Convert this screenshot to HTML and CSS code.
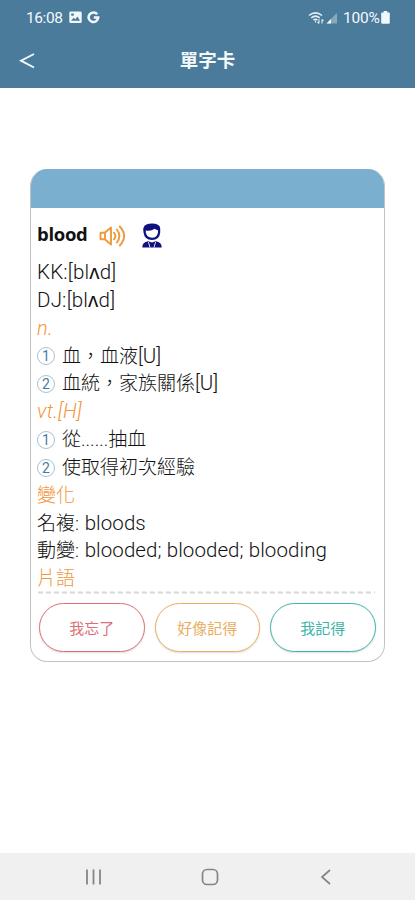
FILE: index.html
```html
<!DOCTYPE html>
<html lang="zh-Hant">
<head>
<meta charset="utf-8">
<title>單字卡</title>
<link rel="stylesheet" href="styles.css">
</head>
<body>
<header class="top">
  <div class="status">
    <span class="clock">16:08</span>
    <svg class="pic" width="13" height="13" viewBox="0 0 13 13"><rect x=".3" y=".5" width="12.4" height="11.5" rx="1.3" fill="#f1f7fa"/><path d="M2 9.8 4.7 6.7 6.3 8.3 8.5 5.5 11 9.8Z" fill="#4a7b9b"/><path d="M2.2 2.5h2.6v2.2H2.2z" fill="#4a7b9b"/></svg>
    <svg class="goog" width="13" height="13" viewBox="0 0 13 13"><path d="M10.2 3.3A4.8 4.8 0 1 0 11.2 6.5H6.8" fill="none" stroke="#f1f7fa" stroke-width="2.5"/></svg>
    <span class="gap"></span>
    <svg class="wifi" width="17" height="14" viewBox="0 0 17 14" fill="none" stroke="#e5eff4" stroke-width="1.6"><path d="M1 4.5Q7.500-.8 14 4.500M3.300 6.800Q7.500 3.300 11.700 6.800M5.500 9.100Q7.500 7.500 9.500 9.100"/><path d="M7.500 9.500v2M11 8.300v4M9.600 11l1.400 1.500M14 12.500v-4M14 8.300l1.400 1.500" stroke-width="1.100"/></svg>
    <svg class="signal" width="12" height="12" viewBox="0 0 12 12"><path d="M.5 11.500 11 1v10.500Z" fill="#86a9be"/><path d="M.5 11.500 5 7v4.500Z" fill="#f1f7fa"/></svg>
    <span class="percent">100%</span>
    <svg class="battery" width="9" height="13" viewBox="0 0 9 13"><path d="M2.700 0h3.600v1.500H8a.8.800 0 0 1 .8.800v9.400a1 1 0 0 1-1 1H1.200a1 1 0 0 1-1-1V2.300a.8.800 0 0 1 .8-.8h1.700Z" fill="#f1f7fa"/></svg>
  </div>
  <div class="title-row">
    <svg class="back" width="17" height="18" viewBox="0 0 17 18"><path d="M16 2 3 8.700l13 6.800" fill="none" stroke="#f4f9fb" stroke-width="1.900"/></svg>
    <h1>單字卡</h1>
  </div>
</header>
<main>
  <section class="card">
    <div class="band"></div>
    <div class="body">
      <div class="word">
        <b>blood</b>
        <svg class="speaker" width="28" height="24" viewBox="0 0 28 24" fill="none" stroke="#f09a3a" stroke-width="1.900" stroke-linecap="round" stroke-linejoin="round"><path d="M2.500 8.800h4.300l6.200-5.300v17l-6.200-5.300H2.500Z"/><path d="M7 9v6M16 8.800Q18.800 12 16 15.300M18.800 5.500Q24 12 18.800 18.500M21.800 2.500Q30.500 12 21.800 21.500"/></svg>
        <svg class="person" width="20" height="25" viewBox="0 0 20 25"><path d="M1.800 4Q3 .5 10 .5q7.500 0 8.200 4.500v4.500Q17.500 17 10 17T1.500 9.500Q.5 6 1.800 4Z" fill="#10107e"/><path d="M3.800 7.500Q9 8.700 12.500 5.800q2 1.200 3.500 1.400v2.200Q15 14.700 10 14.700T3.800 9.500Z" fill="#fff"/><path d="M.3 24.500Q.2 19 6.200 18.300l3.800 1.200 3.800-1.200q6 .7 5.900 6.200Z" fill="#10107e"/><path d="m6.800 19 1.700 5.500H7.600L6 19ZM13.200 19l-1.700 5.500h.9L14 19Z" fill="#fff"/></svg>
      </div>
      <p class="latin">KK:[blʌd]</p>
      <p class="latin">DJ:[blʌd]</p>
      <p class="pos">n.</p>
      <p class="sense"><i class="num">1</i>血，血液<span class="tag">[U]</span></p>
      <p class="sense"><i class="num">2</i>血統，家族關係<span class="tag">[U]</span></p>
      <p class="pos">vt.[H]</p>
      <p class="sense"><i class="num">1</i>從......抽血</p>
      <p class="sense"><i class="num">2</i>使取得初次經驗</p>
      <p class="label">變化</p>
      <p class="forms">名複: <span class="latin">bloods</span></p>
      <p class="forms">動變: <span class="latin">blooded; blooded; blooding</span></p>
      <p class="label">片語</p>
    </div>
    <svg class="rule" width="339" height="3"><path d="M1 1.500h337" stroke="#d8d8d8" stroke-width="2" stroke-dasharray="5 3"/></svg>
    <div class="actions">
      <button class="forgot">我忘了</button>
      <button class="maybe">好像記得</button>
      <button class="known">我記得</button>
    </div>
  </section>
</main>
<nav>
  <svg width="18" height="18" viewBox="0 0 18 18"><path d="M2 1.500v15M8.500 1.500v15M15 1.500v15" stroke="#858585" stroke-width="1.800"/></svg>
  <svg width="18" height="18" viewBox="0 0 18 18"><rect x="1.500" y="1.500" width="15" height="15" rx="4.500" fill="none" stroke="#858585" stroke-width="1.700"/></svg>
  <svg width="18" height="18" viewBox="0 0 18 18"><path d="M13 2 5 9l8 7" fill="none" stroke="#858585" stroke-width="1.700"/></svg>
</nav>
</body>
</html>
```
FILE: styles.css
```css
* { box-sizing: border-box; }
body {
  margin: 0;
  height: 900px;
  display: flex;
  flex-direction: column;
  background: #fff;
  color: #111;
  font-family: Roboto, "Noto Sans CJK TC", sans-serif;
  overflow: hidden;
}
.top { height: 88px; background: #4a7b9b; color: #f4f9fb; }
.status { display: flex; align-items: center; height: 35px; padding: 0 25px 0 26px; font-size: 15.5px; }
.clock { width: 37px; letter-spacing: -0.4px; }
.pic { margin-left: 6px; }
.goog { margin-left: 5px; }
.gap { flex: 1; }
.wifi { margin-right: 1px; }
.signal { margin: 0 5px 0 0; }
.percent { font-size: 15.5px; width: 38px; white-space: nowrap; letter-spacing: -0.2px; }
.title-row { display: grid; grid-template-columns: 60px 1fr 60px; align-items: center; height: 52px; }
.back { margin-left: 18px; }
h1 { margin: 0; text-align: center; font-size: 18.5px; line-height: 28px; font-weight: 700; }
main { flex: 1; padding: 81px 30px 0; }
.card { height: 493px; border: 1.5px solid #c2c2c2; border-top: 0; border-radius: 17px; overflow: hidden; display: flex; flex-direction: column; }
.band { height: 39px; margin: 0 -2px; background: #7bafcf; flex: none; }
.body { padding: 1px 0 0 6px; height: 382.5px; flex: none; font-weight: 300; }
.word { height: 50px; display: flex; align-items: center; font-size: 19.5px; }
.word b { width: 61px; line-height: 24px; margin-top: -1px; font-family: "Open Sans", sans-serif; font-weight: 700; font-size: 18.5px; letter-spacing: -0.3px; }
.speaker { margin-top: 3px; }
.person { margin: 3px 0 0 16px; }
p { margin: 0; height: 27.850px; line-height: 27.850px; font-size: 19px; white-space: nowrap; }
.latin { font-size: 20.5px; letter-spacing: 0.08px; }
p.latin { letter-spacing: 0.2px; }
span.latin { margin-left: 1px; }
.tag { font-size: 20.5px; }
.pos { color: #f2963c; font-style: italic; font-size: 20px; letter-spacing: 0.3px; }
.label { color: #f2963c; }
.sense { display: flex; align-items: center; }
.num { width: 18px; height: 18px; margin-right: 7px; border: 1px solid #a9c0d1; border-radius: 50%; color: #477ba3; font-size: 14px; font-style: normal; font-weight: 400; line-height: 16px; text-align: center; }
.rule { display: block; margin: 0 0 0 6px; flex: none; }
.actions { display: flex; gap: 10px; padding: 9px 0 0 8px; }
button { width: 105.500px; height: 49px; padding: 0; background: #fff; border: 1.5px solid; border-radius: 25px; font: 15px Roboto, "Noto Sans CJK TC", sans-serif; box-shadow: 0 1px 2px #0002; }
.forgot { color: #dc7077; }
.maybe { color: #e9ae5f; }
.known { color: #3eb5a8; }
nav { height: 47px; background: #f0f0f0; display: flex; justify-content: space-between; align-items: center; padding: 0 80px 0 85px; }
```
